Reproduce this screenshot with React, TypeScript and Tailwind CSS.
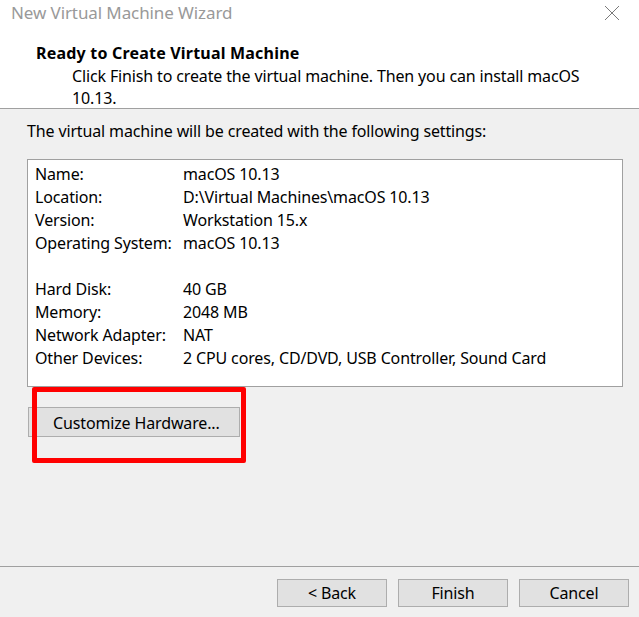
const rows: [string, string][] = [
  ["Name:", "macOS 10.13"],
  ["Location:", "D:\\Virtual Machines\\macOS 10.13"],
  ["Version:", "Workstation 15.x"],
  ["Operating System:", "macOS 10.13"],
];

const rows2: [string, string][] = [
  ["Hard Disk:", "40 GB"],
  ["Memory:", "2048 MB"],
  ["Network Adapter:", "NAT"],
  ["Other Devices:", "2 CPU cores, CD/DVD, USB Controller, Sound Card"],
];

function Row({ label, value }: { label: string; value: string }) {
  return (
    <div className="flex h-[23px] items-center">
      <span className="w-[148px] shrink-0">{label}</span>
      <span>{value}</span>
    </div>
  );
}

function Btn({ children }: { children: string }) {
  return (
    <button className="h-[28px] w-[110px] border border-[#adadad] bg-[#e1e1e1] text-[16px] text-black">
      {children}
    </button>
  );
}

export default function App() {
  return (
    <div className="flex h-[617px] w-[639px] flex-col bg-[#f0f0f0] text-[16px] tracking-[-0.14px] text-black font-['Noto_Sans',sans-serif]">
      <div className="h-[109px] shrink-0 border-b border-[#a0a0a0] bg-white">
        <div className="flex h-[25px] items-center justify-between pl-[11px] pr-[19px]">
          <span className="text-[17px] tracking-[-0.1px] text-[#999999]">New Virtual Machine Wizard</span>
          <svg width="16" height="16" viewBox="0 0 16 16" className="text-[#7a7a7a]">
            <path d="M1 1L15 15M15 1L1 15" stroke="currentColor" strokeWidth="1" />
          </svg>
        </div>
        <div className="pl-[36px] pt-[17px]">
          <div className="h-[23px] leading-[23px] font-bold tracking-[0.2px]">Ready to Create Virtual Machine</div>
          <div className="pl-[36px] leading-[22px]">
            Click Finish to create the virtual machine. Then you can install macOS
            <br />
            10.13.
          </div>
        </div>
      </div>

      <div className="relative flex-1 px-[27px] pt-[11px]">
        <div className="h-[23px] leading-[23px]">The virtual machine will be created with the following settings:</div>
        <div className="mt-[16px] h-[228px] w-[596px] border border-[#a0a0a0] bg-white px-[7px] pt-[2px]">
          {rows.map(([l, v]) => (
            <Row key={l} label={l} value={v} />
          ))}
          <div className="h-[23px]" />
          {rows2.map(([l, v]) => (
            <Row key={l} label={l} value={v} />
          ))}
        </div>
        <button className="ml-px mt-[20px] flex h-[30px] w-[212px] items-center border border-[#adadad] bg-[#e1e1e1] pl-[24px] pt-px text-[16px]">
          Customize Hardware...
        </button>
        <div className="pointer-events-none absolute left-[32px] top-[278px] h-[76px] w-[214px] rounded-[2px] border-[5px] border-[#ff0000]" />
      </div>

      <div className="flex h-[51px] shrink-0 items-start justify-end gap-[11px] border-t border-[#a0a0a0] pr-[10px] pt-[12px]">
        <Btn>&lt; Back</Btn>
        <Btn>Finish</Btn>
        <Btn>Cancel</Btn>
      </div>
    </div>
  );
}
